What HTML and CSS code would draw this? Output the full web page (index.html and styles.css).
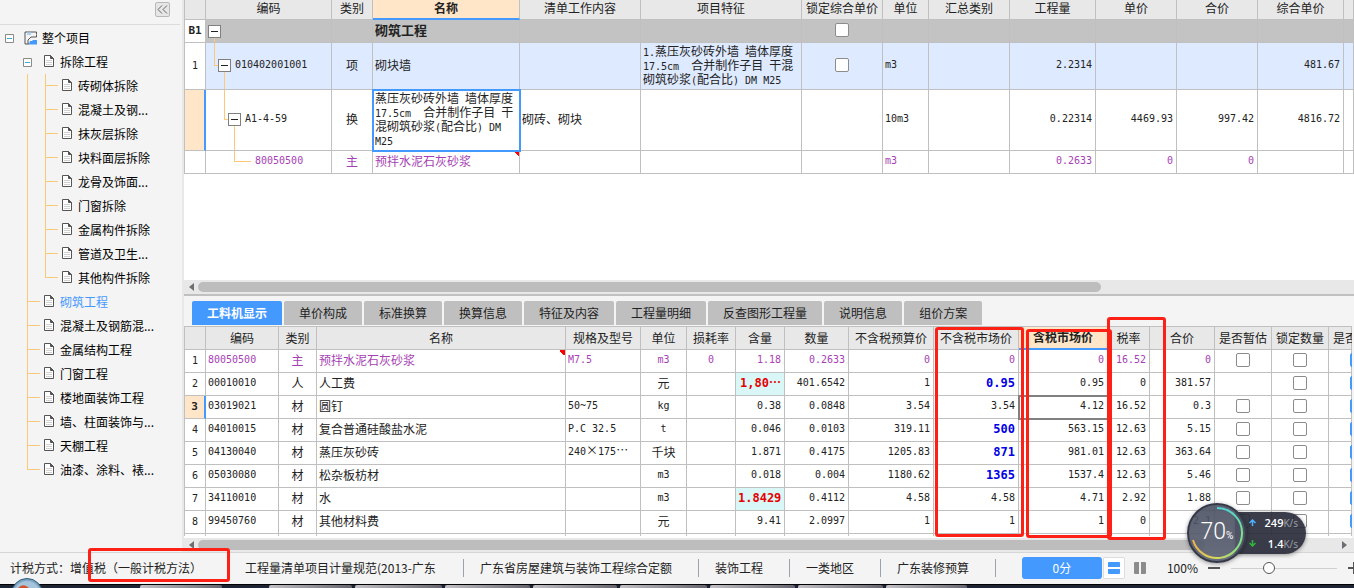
FILE: index.html
```html
<!DOCTYPE html>
<html lang="zh-CN">
<head>
<meta charset="utf-8">
<title>整个项目</title>
<link rel="stylesheet" href="styles.css">
</head>
<body>
<svg class="defs" aria-hidden="true">
  <symbol id="doc" viewBox="0 0 10 12"><path d="M.5.5H6.500L9.500 3.500V11.500H.5Z" fill="#fff" stroke="#555"/><path d="M6.500.5V3.500H9.500Z" fill="#555" stroke="#555"/><path d="M2 5.500H8M2 7.500H8M2 9.500H8" stroke="#d0d0d0"/></symbol>
  <symbol id="toggle" viewBox="0 0 9 9"><path d="M.5.5H8.500V8.500H.5Z" fill="#fff" stroke="#8a8a8a"/><path d="M2 4.500H7" stroke="#3fa9d8"/></symbol>
</svg>
<div class="app">
  <div class="main">
    <aside class="sidebar">
      <div class="side-head"><button class="collapse" aria-label="收起"><svg width="11" height="9" viewBox="0 0 11 9"><path d="M5 .5L1 4.500L5 8.500M10 .5L6 4.500L10 8.500" fill="none" stroke="#666"/></svg></button></div>
      <ul class="tree">
        <li class="root"><svg class="tg"><use href="#toggle"/></svg><svg class="proj" viewBox="0 0 14 14"><path d="M12.500 3.500V1H1V13H5" fill="none" stroke="#555"/><path d="M3 1.500H7V4H3Z" fill="#a9d2f7"/><path d="M4 13V9L7 6H12.500V4" fill="none" stroke="#555"/><path d="M5 13L6 10H8L9 9H13V13.500H5Z" fill="#4499ff"/></svg>整个项目</li>
        <li class="branch"><svg class="tg"><use href="#toggle"/></svg><svg class="doc"><use href="#doc"/></svg>拆除工程</li>
        <li><i class="v"></i><i class="t"></i><svg class="doc"><use href="#doc"/></svg>砖砌体拆除</li>
        <li><i class="v"></i><i class="t"></i><svg class="doc"><use href="#doc"/></svg>混凝土及钢...</li>
        <li><i class="v"></i><i class="t"></i><svg class="doc"><use href="#doc"/></svg>抹灰层拆除</li>
        <li><i class="v"></i><i class="t"></i><svg class="doc"><use href="#doc"/></svg>块料面层拆除</li>
        <li><i class="v"></i><i class="t"></i><svg class="doc"><use href="#doc"/></svg>龙骨及饰面...</li>
        <li><i class="v"></i><i class="t"></i><svg class="doc"><use href="#doc"/></svg>门窗拆除</li>
        <li><i class="v"></i><i class="t"></i><svg class="doc"><use href="#doc"/></svg>金属构件拆除</li>
        <li><i class="v"></i><i class="t"></i><svg class="doc"><use href="#doc"/></svg>管道及卫生...</li>
        <li><i class="v"></i><i class="t last"></i><svg class="doc"><use href="#doc"/></svg>其他构件拆除</li>
        <li class="active"><i class="t"></i><svg class="doc"><use href="#doc"/></svg>砌筑工程</li>
        <li><i class="t"></i><svg class="doc"><use href="#doc"/></svg>混凝土及钢筋混...</li>
        <li><i class="t"></i><svg class="doc"><use href="#doc"/></svg>金属结构工程</li>
        <li><i class="t"></i><svg class="doc"><use href="#doc"/></svg>门窗工程</li>
        <li><i class="t"></i><svg class="doc"><use href="#doc"/></svg>楼地面装饰工程</li>
        <li><i class="t"></i><svg class="doc"><use href="#doc"/></svg>墙、柱面装饰与...</li>
        <li><i class="t"></i><svg class="doc"><use href="#doc"/></svg>天棚工程</li>
        <li><i class="t last"></i><svg class="doc"><use href="#doc"/></svg>油漆、涂料、裱...</li>
      </ul>
    </aside>

    <div class="content">
      <section class="top-pane">
        <div class="viewport">
          <table class="grid bill">
            <colgroup><col class="w21"><col class="w126"><col class="w41"><col class="w147"><col class="w121"><col class="w161"><col class="w81"><col class="w46"><col class="w81"><col class="w86"><col class="w81"><col class="w81"><col class="w86"><col></colgroup>
            <thead><tr><th></th><th>编码</th><th>类别</th><th class="sel">名称</th><th>清单工作内容</th><th>项目特征</th><th>锁定综合单价</th><th>单位</th><th>汇总类别</th><th>工程量</th><th>单价</th><th>合价</th><th>综合单价</th><th></th></tr></thead>
            <tbody>
              <tr class="group"><td class="no"><b>B1</b></td><td class="g0"><button class="exp" aria-label="折叠"></button></td><td></td><td class="title">砌筑工程</td><td></td><td></td><td class="c"><input type="checkbox" aria-label="锁定综合单价"></td><td></td><td></td><td></td><td></td><td></td><td></td><td></td></tr>
              <tr class="item"><td class="no">1</td><td class="g1 m"><button class="exp" aria-label="折叠"></button>010402001001</td><td class="c">项</td><td>砌块墙</td><td></td><td class="desc"><span>1.</span>蒸压灰砂砖外墙<span> </span>墙体厚度<br><span>17.5cm  </span>合并制作子目<span> </span>干混<br>砌筑砂浆<span>(</span>配合比<span>) DM M25</span></td><td class="c"><input type="checkbox" aria-label="锁定综合单价"></td><td class="m">m3</td><td></td><td class="n">2.2314</td><td></td><td></td><td class="n">481.67</td><td></td></tr>
              <tr class="quota"><td class="no cur"></td><td class="g2 m"><button class="exp" aria-label="折叠"></button>A1-4-59</td><td class="c">换</td><td class="desc focus">蒸压灰砂砖外墙<span> </span>墙体厚度<br><span>17.5cm  </span>合并制作子目<span> </span>干<br>混砌筑砂浆<span>(</span>配合比<span>) DM</span><br><span>M25</span></td><td>砌砖、砌块</td><td></td><td></td><td class="m">10m3</td><td></td><td class="n">0.22314</td><td class="n">4469.93</td><td class="n">997.42</td><td class="n">4816.72</td><td></td></tr>
              <tr class="mat"><td class="no"></td><td class="g3 m">80050500</td><td class="c">主</td><td class="flag">预拌水泥石灰砂浆</td><td></td><td></td><td></td><td class="m">m3</td><td></td><td class="n">0.2633</td><td class="n">0</td><td class="n">0</td><td></td><td></td></tr>
            </tbody>
          </table>
        </div>
        <div class="hscroll"><svg width="5" height="8" viewBox="0 0 5 8"><path d="M5 0V8L0 4Z" fill="#6d6d76"/></svg><div class="thumb short"></div></div>
      </section>

      <section class="bottom-pane">
        <nav class="tabs"><button class="on">工料机显示</button><button>单价构成</button><button>标准换算</button><button>换算信息</button><button>特征及内容</button><button>工程量明细</button><button>反查图形工程量</button><button>说明信息</button><button>组价方案</button></nav>
        <div class="viewport low">
          <table class="grid res">
            <colgroup><col class="w21"><col class="w73"><col class="w38"><col class="w249"><col class="w75"><col class="w46"><col class="w49"><col class="w49"><col class="w64"><col class="w85"><col class="w85"><col class="w89"><col class="w42"><col class="w65"><col class="w57"><col class="w57"><col></colgroup>
            <thead><tr><th></th><th>编码</th><th>类别</th><th>名称</th><th>规格及型号</th><th>单位</th><th>损耗率</th><th>含量</th><th>数量</th><th>不含税预算价</th><th>不含税市场价</th><th class="sel">含税市场价</th><th>税率</th><th>合价</th><th>是否暂估</th><th>锁定数量</th><th class="cut">是否</th></tr></thead>
            <tbody>
              <tr class="mat"><td class="no">1</td><td class="m">80050500</td><td class="c">主</td><td class="flag">预拌水泥石灰砂浆</td><td class="m">M7.5</td><td class="c m">m3</td><td class="c m">0</td><td class="n">1.18</td><td class="n">0.2633</td><td class="n">0</td><td class="n">0</td><td class="n">0</td><td class="n">16.52</td><td class="n">0</td><td class="c"><input type="checkbox" aria-label="是否暂估"></td><td class="c"><input type="checkbox" aria-label="锁定数量"></td><td class="edge"><input type="checkbox" checked aria-label="是否"></td></tr>
              <tr><td class="no">2</td><td class="m">00010010</td><td class="c">人</td><td>人工费</td><td></td><td class="c">元</td><td></td><td class="n hot">1,80<span class="wide">⋯</span></td><td class="n">401.6542</td><td class="n">1</td><td class="n mod">0.95</td><td class="n">0.95</td><td class="n">0</td><td class="n">381.57</td><td></td><td class="c"><input type="checkbox" aria-label="锁定数量"></td><td class="edge"><input type="checkbox" checked aria-label="是否"></td></tr>
              <tr><td class="no cur"><b>3</b></td><td class="m">03019021</td><td class="c">材</td><td>圆钉</td><td class="m">50~75</td><td class="c m">kg</td><td></td><td class="n">0.38</td><td class="n">0.0848</td><td class="n">3.54</td><td class="n">3.54</td><td class="n pick">4.12</td><td class="n">16.52</td><td class="n">0.3</td><td class="c"><input type="checkbox" aria-label="是否暂估"></td><td class="c"><input type="checkbox" aria-label="锁定数量"></td><td class="edge"><input type="checkbox" checked aria-label="是否"></td></tr>
              <tr><td class="no">4</td><td class="m">04010015</td><td class="c">材</td><td>复合普通硅酸盐水泥</td><td class="m">P.C 32.5</td><td class="c m">t</td><td></td><td class="n">0.046</td><td class="n">0.0103</td><td class="n">319.11</td><td class="n mod">500</td><td class="n">563.15</td><td class="n">12.63</td><td class="n">5.15</td><td class="c"><input type="checkbox" aria-label="是否暂估"></td><td class="c"><input type="checkbox" aria-label="锁定数量"></td><td class="edge"><input type="checkbox" checked aria-label="是否"></td></tr>
              <tr><td class="no">5</td><td class="m">04130040</td><td class="c">材</td><td>蒸压灰砂砖</td><td class="m">240<span class="wide">×</span>175<span class="wide">⋯</span></td><td class="c">千块</td><td></td><td class="n">1.871</td><td class="n">0.4175</td><td class="n">1205.83</td><td class="n mod">871</td><td class="n">981.01</td><td class="n">12.63</td><td class="n">363.64</td><td class="c"><input type="checkbox" aria-label="是否暂估"></td><td class="c"><input type="checkbox" aria-label="锁定数量"></td><td class="edge"><input type="checkbox" checked aria-label="是否"></td></tr>
              <tr><td class="no">6</td><td class="m">05030080</td><td class="c">材</td><td>松杂板枋材</td><td></td><td class="c m">m3</td><td></td><td class="n">0.018</td><td class="n">0.004</td><td class="n">1180.62</td><td class="n mod">1365</td><td class="n">1537.4</td><td class="n">12.63</td><td class="n">5.46</td><td class="c"><input type="checkbox" aria-label="是否暂估"></td><td class="c"><input type="checkbox" aria-label="锁定数量"></td><td class="edge"><input type="checkbox" checked aria-label="是否"></td></tr>
              <tr><td class="no">7</td><td class="m">34110010</td><td class="c">材</td><td>水</td><td></td><td class="c m">m3</td><td></td><td class="n hot">1.8429</td><td class="n">0.4112</td><td class="n">4.58</td><td class="n">4.58</td><td class="n">4.71</td><td class="n">2.92</td><td class="n">1.88</td><td class="c"><input type="checkbox" aria-label="是否暂估"></td><td class="c"><input type="checkbox" aria-label="锁定数量"></td><td class="edge"><input type="checkbox" checked aria-label="是否"></td></tr>
              <tr><td class="no">8</td><td class="m">99450760</td><td class="c">材</td><td>其他材料费</td><td></td><td class="c">元</td><td></td><td class="n">9.41</td><td class="n">2.0997</td><td class="n">1</td><td class="n">1</td><td class="n">1</td><td class="n">0</td><td class="n">2.1</td><td class="c"><input type="checkbox" aria-label="是否暂估"></td><td class="c"><input type="checkbox" aria-label="锁定数量"></td><td class="edge"><input type="checkbox" checked aria-label="是否"></td></tr>
              <tr><td class="no"></td><td></td><td></td><td></td><td></td><td></td><td></td><td></td><td></td><td></td><td></td><td></td><td></td><td></td><td></td><td></td><td></td></tr>
            </tbody>
          </table>
        </div>
        <div class="hscroll"><svg width="5" height="8" viewBox="0 0 5 8"><path d="M5 0V8L0 4Z" fill="#6d6d76"/></svg><div class="thumb long"></div><svg class="rt" width="5" height="8" viewBox="0 0 5 8"><path d="M0 0V8L5 4Z" fill="#6d6d76"/></svg></div>
      </section>
    </div>
  </div>

  <footer class="status">
    <div class="info"><span class="first">计税方式：增值税（一般计税方法）</span><span class="second">工程量清单项目计量规范(2013-广东</span><span>广东省房屋建筑与装饰工程综合定额</span><span>装饰工程</span><span>一类地区</span><span>广东装修预算</span></div>
    <div class="tools">
      <button class="score">0分</button>
      <button class="view on" aria-label="上下布局"><svg width="12" height="12" viewBox="0 0 12 12"><path d="M0 1Q0 0 1 0H11Q12 0 12 1V5H0ZM0 7H12V11Q12 12 11 12H1Q0 12 0 11Z" fill="#4499ff"/></svg></button>
      <button class="view" aria-label="左右布局"><svg width="12" height="12" viewBox="0 0 12 12"><path d="M1 0H5V12H1Q0 12 0 11V1Q0 0 1 0ZM7 0H11Q12 0 12 1V11Q12 12 11 12H7Z" fill="#8c8c8c"/></svg></button>
      <span class="pct">100%</span>
      <button class="step" aria-label="缩小"><svg width="12" height="12" viewBox="0 0 12 12"><path d="M0 6H12" stroke="#555" stroke-width="2"/></svg></button>
      <input class="zoom" type="range" min="0" max="100" value="34" aria-label="缩放">
      <button class="step" aria-label="放大"><svg width="12" height="12" viewBox="0 0 12 12"><path d="M0 6H12M6 0V12" stroke="#555" stroke-width="2"/></svg></button>
    </div>
  </footer>
  <div class="taskbar"><i></i><i></i><i></i><i></i><i></i><i></i><i></i><i></i><i></i></div>
  <svg class="orb" width="32" height="10" viewBox="0 0 32 10"><circle cx="16" cy="16" r="15.500" fill="#7fa6c4" stroke="#2b5878"/><circle cx="16" cy="16" r="13" fill="#a7c5da"/><path d="M7 10Q11 6 15 8L18 10Z" fill="#d4512c"/></svg>

  <div class="mark m1"></div><div class="mark m2"></div><div class="mark m3"></div><div class="mark m4"></div>

  <div class="monitor">
    <div class="gauge">
      <svg width="60" height="60" viewBox="0 0 60 60"><defs><linearGradient id="disc" x1="0" y1="0" x2="0" y2="1"><stop offset="0" stop-color="#484f60"/><stop offset="1" stop-color="#5a5f71"/></linearGradient><linearGradient id="arc1" x1="0" y1="0" x2="0" y2="1"><stop offset="0" stop-color="#4fd5d4"/><stop offset="1" stop-color="#7fe08c"/></linearGradient><linearGradient id="arc2" x1="1" y1="0" x2="0" y2="0"><stop offset="0" stop-color="#7fe08c"/><stop offset=".5" stop-color="#d3dd59"/><stop offset="1" stop-color="#efb44b"/></linearGradient></defs><circle cx="30" cy="30" r="29" fill="url(#disc)" fill-opacity=".9" stroke="#343847" stroke-width="2"/><path d="M30 5A25 25 0 0 1 55 31" fill="none" stroke="url(#arc1)" stroke-width="2"/><path d="M55 31A25 25 0 0 1 6 37" fill="none" stroke="url(#arc2)" stroke-width="2"/></svg>
      <div class="reading">70<small>%</small></div>
    </div>
    <div class="net">
      <div><svg width="7" height="7" viewBox="0 0 7 7"><path d="M3.500 7V1M.5 4L3.500 1L6.500 4" fill="none" stroke="#4cb2ff" stroke-width="1.500"/></svg><span><b>249</b>K/s</span></div>
      <div><svg width="7" height="7" viewBox="0 0 7 7"><path d="M3.500 0V6M.5 3L3.500 6L6.500 3" fill="none" stroke="#2eb83c" stroke-width="1.500"/></svg><span><b>1.4</b>K/s</span></div>
    </div>
  </div>
</div>
</body>
</html>
```
FILE: styles.css
```css
* { box-sizing: border-box; }
body { margin: 0; color: #222; font: 12px/16px "Noto Sans CJK SC", sans-serif; }
button { margin: 0; padding: 0; border: 0; background: none; font: inherit; color: inherit; }
svg { display: block; flex: none; }
.defs { display: none; }
.app { position: relative; display: flex; flex-direction: column; height: 100vh; overflow: hidden; background: #f4f4f4; }
.main { flex: 1; min-height: 0; display: flex; }

/* project tree */
.sidebar { flex: none; width: 184px; border-right: 2px solid #e8e8e8; overflow: hidden; color: #000; }
.side-head { height: 25px; margin-right: 2px; padding: 2px 10px 0 0; border-bottom: 1px solid #dcdcdc; display: flex; justify-content: flex-end; }
.collapse { width: 15px; height: 15px; border: 1px solid #b8b8b8; border-radius: 2px; background: #e6e6e6; display: grid; place-items: center; }
.tree { list-style: none; margin: 1px 0 0; padding: 0; }
.tree li { display: flex; align-items: center; height: 24px; padding-left: 27px; white-space: nowrap; }
.tree li.root { padding-left: 5px; }
.tree li.branch { padding-left: 23px; }
.tree li.active { color: #4499ff; }
.tg { width: 9px; height: 9px; }
.root .tg { margin-right: 10px; }
.branch .tg { margin-right: 12px; }
.proj { width: 14px; height: 14px; margin-right: 4px; }
.doc { width: 10px; height: 12px; margin: 0 6px 2px 0; }
.tree i { flex: none; height: 24px; }
.tree .v { width: 18px; background: linear-gradient(#ffc878, #ffc878) 0 0 / 1px 100% no-repeat; }
.tree .t { width: 17px; background: linear-gradient(#ffc878, #ffc878) 0 0 / 1px 100% no-repeat, linear-gradient(#ffc878, #ffc878) 0 11px / 13px 1px no-repeat; }
.tree .t.last { background-size: 1px 11px, 13px 1px; }

/* panes */
.content { flex: 1; min-width: 0; display: flex; flex-direction: column; }
.top-pane { flex: 295 1 0; min-height: 0; display: flex; flex-direction: column; background: #fff; border-bottom: 2px solid #c0c0c0; }
.bottom-pane { flex: 257 1 0; min-height: 0; display: flex; flex-direction: column; }
.viewport { flex: 1; min-height: 0; overflow: hidden; }
.viewport.low { background: #fff; margin-right: 2px; border-top: 1px solid #c0c0c0; border-bottom: 2px solid #fff; }
.hscroll { flex: none; display: flex; align-items: center; height: 14px; padding: 0 7px 0 5px; background: #e8e8e8; }
.thumb { height: 10px; margin-left: 4px; border-radius: 5px; background: #bdbdbd; }
.short { width: 78%; }
.long { width: 87%; }
.rt { margin-left: auto; }

/* tables */
.grid { width: 100%; table-layout: fixed; border-collapse: separate; border-spacing: 0; border-left: 1px solid #c0c0c0; }
.grid th, .grid td { padding: 0 2px 2px; border: solid #c0c0c0; border-width: 0 1px 1px 0; white-space: nowrap; font-weight: 400; text-align: left; line-height: 14px; }
.grid th { padding: 0; background: #e8e8e8; text-align: center; }
.grid th.sel { background: #ffe6c8; font-weight: 700; border-bottom: 2px solid #4499ff; }
.grid th.cut { padding-left: 4px; text-align: left; }
.bill th { height: 20px; padding-bottom: 5px; }
.bill th.sel { padding-bottom: 4px; line-height: 14px; }
.res th { height: 23px; }
.res td { height: 23px; }
.bill th { padding-bottom: 4px; }
.bill th.sel { padding-bottom: 3px; }
.group td { height: 23px; background: #c3c3c3; }
.item td { height: 47px; background-color: #deeaff; }
.quota td { height: 61px; }
.mat td { height: 23px; color: #a63fb4; }
.grid td.no { padding: 0; text-align: center; background: #fff; color: #222; font: 10px/14px "DejaVu Sans Mono", monospace; }
.no b { font-size: 11px; }
.grid td.cur { background: #ffe6c8; border-right: 2px solid #4499ff; }
.grid td.c { text-align: center; }
.grid td.m { font: 10px/14px "DejaVu Sans Mono", "Noto Sans CJK SC", monospace; }
.grid td.n { padding-right: 3px; text-align: right; font: 10px/14px "DejaVu Sans Mono", monospace; }
.grid td.title { font-weight: 700; font-size: 13px; }
.grid td.mod { font-size: 12px; font-weight: 700; color: #0000e6; }
.grid td.hot { font-size: 12px; font-weight: 700; color: #e60000; background: #daf7f7; }
.grid td.focus { outline: 2px solid #4499ff; outline-offset: -1px; }
.grid td.pick { outline: 2px solid #808080; outline-offset: -1px; }
.flag { background: linear-gradient(to top right, transparent 50%, #f00 50%) right top / 6px 6px no-repeat; }
.desc span { font: 10px/1px "DejaVu Sans Mono", monospace; white-space: pre; }
.wide { font-family: "Noto Sans CJK SC", sans-serif; font-size: 12px; line-height: 1px; }
.grid input { appearance: none; display: block; width: 14px; height: 14px; margin: 0 auto; border: 1px solid #8c8c8c; border-radius: 2px; background: #fff; }
.grid .edge { padding: 0 0 2px 21px; }
.grid .edge input { margin: 0; border-color: #4499ff; background: #4499ff; }

/* code hierarchy guides */
.exp { display: inline-block; vertical-align: middle; width: 13px; height: 13px; margin-right: 4px; border: 1px solid #808080; background: linear-gradient(#222, #222) center / 7px 1px no-repeat #fff; }
.grid .g0 { background: linear-gradient(#ffc878, #ffc878) 8px 16px / 1px 20px no-repeat #c3c3c3; }
.grid .g1 { padding-left: 12px; background-image: linear-gradient(#ffc878, #ffc878), linear-gradient(#ffc878, #ffc878), linear-gradient(#ffc878, #ffc878); background-repeat: no-repeat; background-position: 8px 0, 8px 22px, 18px 28px; background-size: 1px 22px, 5px 1px, 1px 30px; }
.grid .g2 { padding-left: 22px; background-image: linear-gradient(#ffc878, #ffc878), linear-gradient(#ffc878, #ffc878), linear-gradient(#ffc878, #ffc878); background-repeat: no-repeat; background-position: 18px 0, 18px 29px, 28px 35px; background-size: 1px 29px, 5px 1px, 1px 30px; }
.grid .g3 { padding-left: 49px; background-image: linear-gradient(#ffc878, #ffc878), linear-gradient(#ffc878, #ffc878); background-repeat: no-repeat; background-position: 28px 0, 28px 10px; background-size: 1px 10px, 17px 1px; }

.w21 { width: 21px; } .w38 { width: 38px; } .w41 { width: 41px; } .w42 { width: 42px; }
.w46 { width: 46px; } .w49 { width: 49px; } .w57 { width: 57px; } .w64 { width: 64px; }
.w65 { width: 65px; } .w73 { width: 73px; } .w75 { width: 75px; } .w81 { width: 81px; }
.w85 { width: 85px; } .w86 { width: 86px; } .w89 { width: 89px; } .w121 { width: 121px; }
.w126 { width: 126px; } .w147 { width: 147px; } .w161 { width: 161px; } .w249 { width: 249px; }

/* tabs */
.tabs { flex: none; display: flex; gap: 2px; padding: 5px 8px 1px; }
.tabs button { height: 24px; padding: 0 15px; border-radius: 2px 2px 0 0; background: #bfbfbf; white-space: nowrap; }
.tabs .on { background: #4499ff; color: #fff; font-weight: 700; }

/* status bar */
.status { flex: none; display: flex; align-items: center; justify-content: space-between; height: 32px; padding-bottom: 1px; border-top: 1px solid #d6d6d6; white-space: nowrap; }
.info { display: flex; align-items: center; }
.info span { padding: 0 26px 0 16px; border-right: 1px solid #9aa3ad; line-height: 18px; }
.info .first { width: 245px; padding: 0 0 0 10px; border: 0; }
.info .second { width: 219px; padding: 0; }
.tools { display: flex; align-items: center; margin-right: -6px; }
.score { width: 80px; height: 22px; margin-right: 1px; border-radius: 3px; background: #4499ff; color: #fff; }
.view { width: 22px; height: 22px; margin-right: 4px; display: grid; place-items: center; }
.view.on { background: #fff; border: 1px solid #ddd; border-radius: 2px; }
.pct { margin: 0 10px 0 12px; }
.step { width: 12px; }
.zoom { appearance: none; width: 106px; height: 14px; margin: 0 11px; background: linear-gradient(#d0d0d0, #d0d0d0) center / 100% 1px no-repeat; }
.zoom::-webkit-slider-thumb { appearance: none; width: 12px; height: 12px; border: 1px solid #555; border-radius: 50%; background: #fff; }

/* desktop task bar */
.taskbar { flex: none; display: grid; grid-template-columns: 140px 85px 44px 86px 90px 88px 87px 90px 88px 88px 84px; height: 4px; border-top: 1px solid #000; background: #1d2433; overflow: hidden; }
.taskbar i { height: 3px; margin-right: 3px; border-radius: 2px 2px 0 0; background: linear-gradient(90deg, #c2c0c6, #67656f); }
.taskbar i:nth-child(1) { grid-column: 2; }
.taskbar i:nth-child(2) { grid-column: 4; }
.orb { position: absolute; left: 11px; bottom: 0; }

/* annotations */
.mark { position: absolute; border: 3px solid #ff2015; border-radius: 3px; pointer-events: none; }
.m1 { left: 88px; top: 548px; width: 142px; height: 34px; }
.m2 { left: 935px; top: 327px; width: 89px; height: 210px; }
.m3 { left: 1026px; top: 329px; width: 86px; height: 209px; }
.m4 { left: 1107px; top: 317px; width: 59px; height: 223px; }

/* floating monitor */
.monitor { position: absolute; left: 1187px; top: 503px; display: flex; align-items: center; color: #fff; font-family: "Open Sans", sans-serif; }
.gauge { position: relative; z-index: 1; border-radius: 50%; box-shadow: 0 1px 4px #0006; }
.reading { position: absolute; inset: 0; display: flex; align-items: baseline; justify-content: center; font: 300 23px/58px Roboto, sans-serif; }
.reading small { font: 400 10px/58px Roboto, sans-serif; }
.net { width: 71px; height: 42px; margin-left: -12px; padding-left: 14px; border-radius: 0 21px 21px 0; background: #262936e6; box-shadow: 0 1px 4px #0006; }
.net div { display: flex; align-items: center; justify-content: space-between; height: 21px; padding-right: 8px; font-size: 10px; line-height: 20px; color: #a0a2aa; }
.net b { font-size: 11px; font-weight: 600; color: #fff; }
```
